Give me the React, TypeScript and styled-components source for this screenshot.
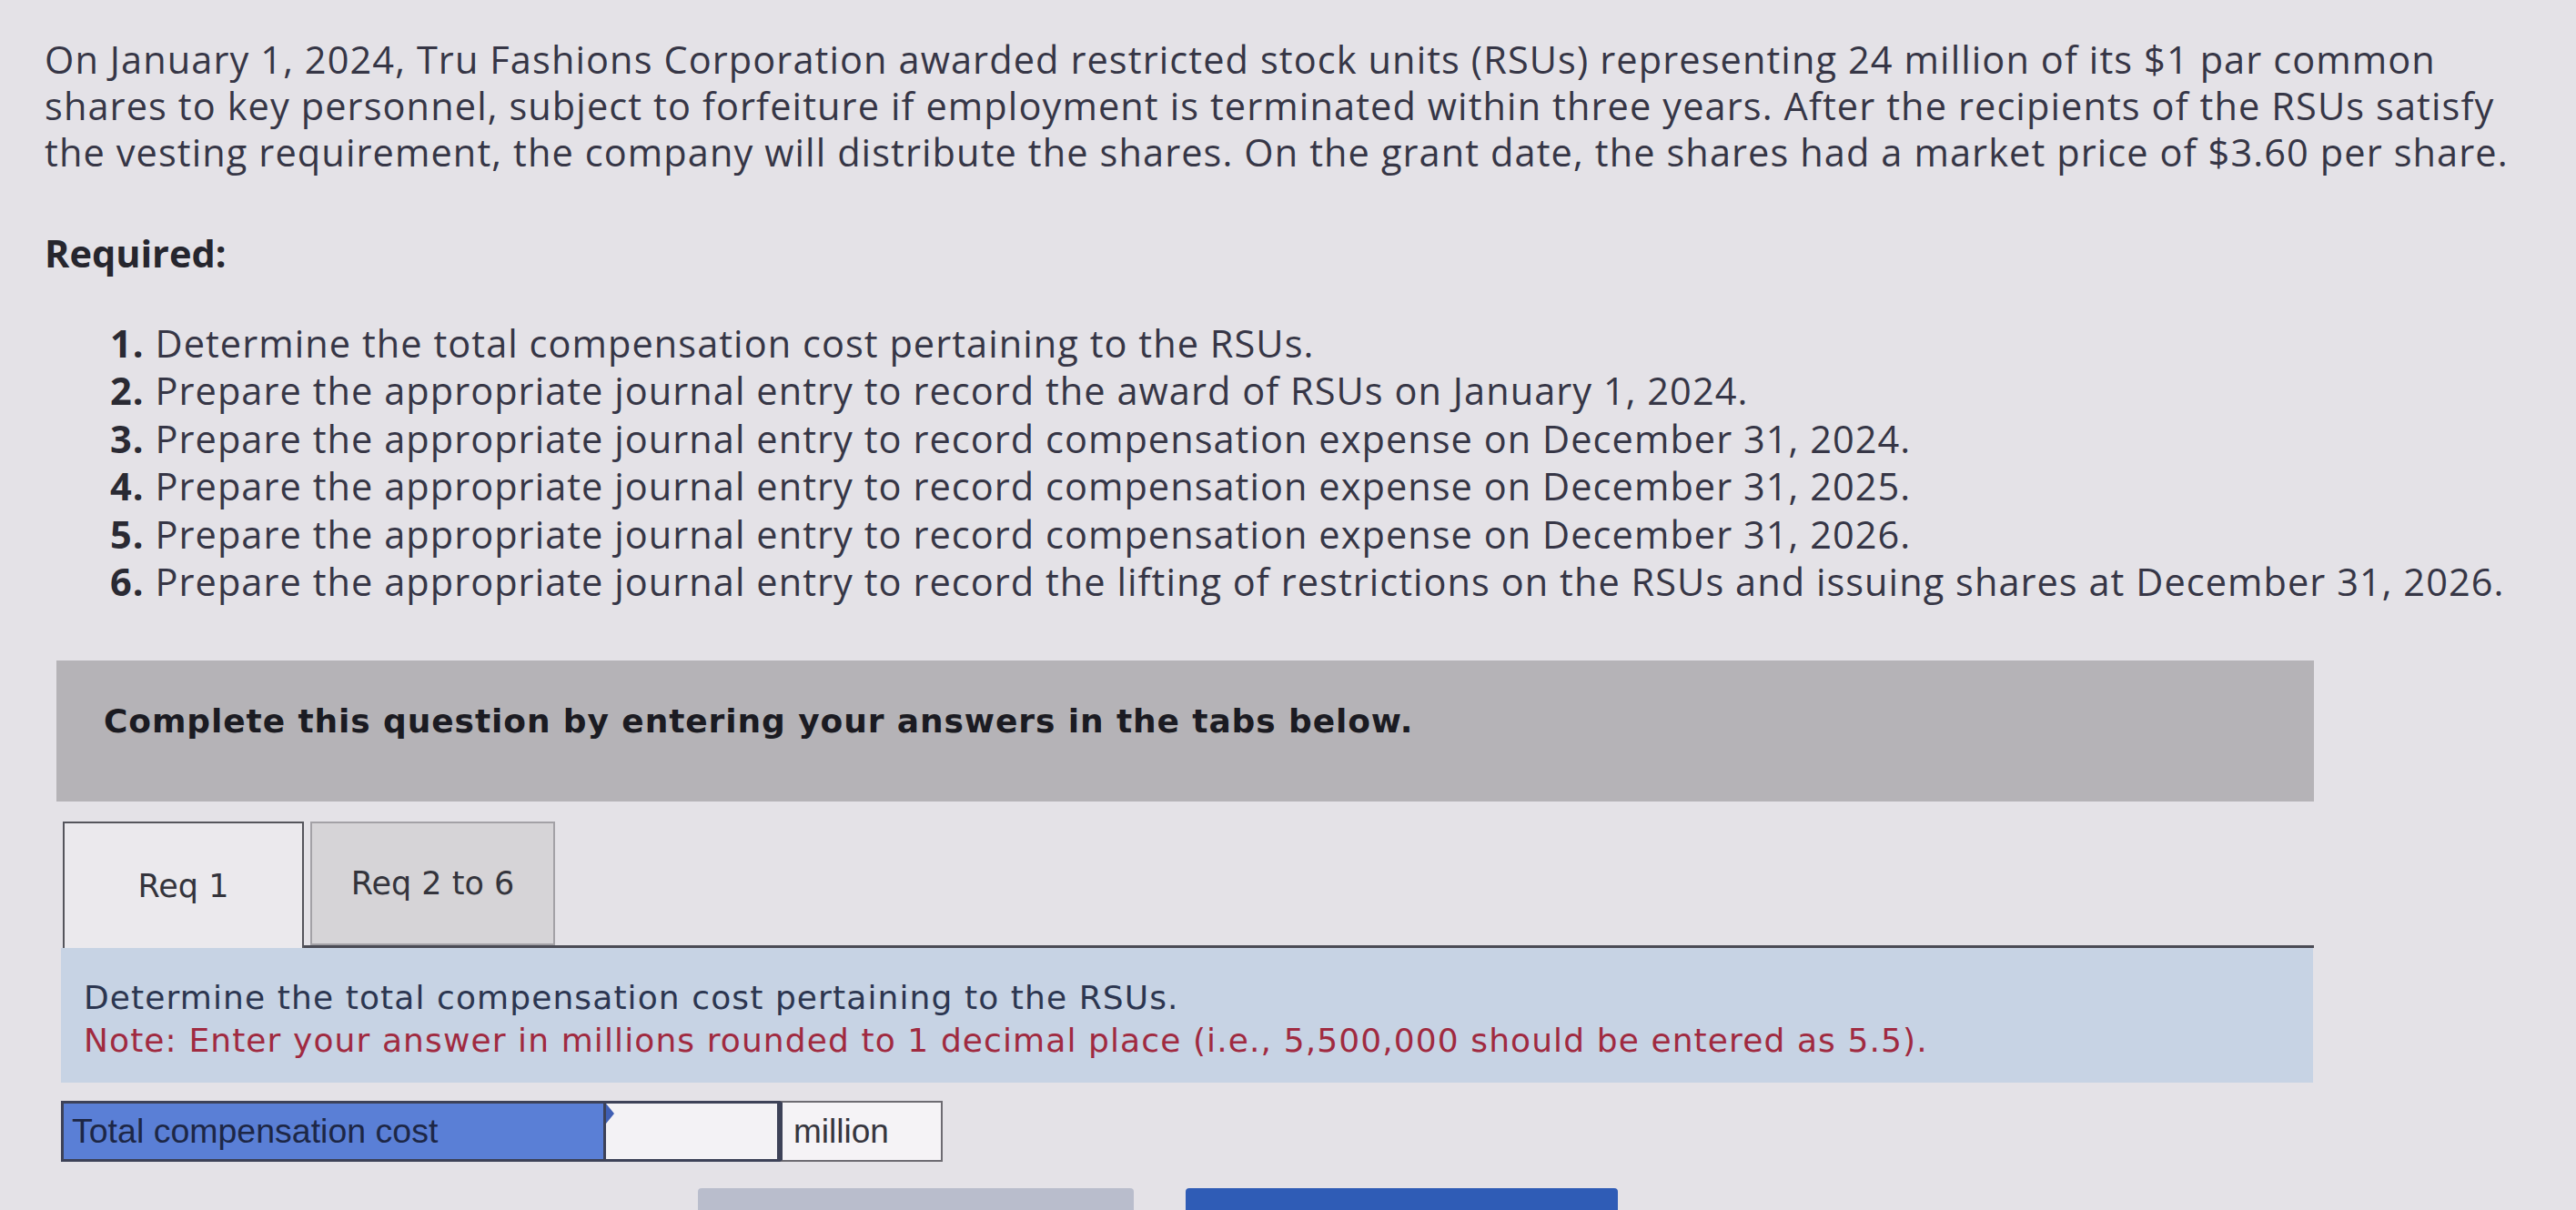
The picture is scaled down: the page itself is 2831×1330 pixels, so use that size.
import React from "react";
import styled, { createGlobalStyle } from "styled-components";

const Global = createGlobalStyle`
  html, body {
    margin: 0;
    padding: 0;
    background: #e4e2e7;
  }
  body {
    width: 2831px;
    height: 1330px;
    overflow: hidden;
  }
`;

const Page = styled.div`
  padding: 40px 0 0 49px;
  font-family: "Open Sans", Lato, sans-serif;
  color: #363646;
`;

const Intro = styled.p`
  margin: 0;
  font-size: 41.5px;
  line-height: 51px;
  white-space: nowrap;
  letter-spacing: 1.1px;
`;

const Line = styled.span`
  display: block;
`;

const Required = styled.h3`
  margin: 60px 0 0;
  font-size: 41.5px;
  line-height: 51px;
  font-weight: 700;
  color: #26262e;
`;

const List = styled.ol`
  margin: 47px 0 0;
  padding: 0 0 0 72px;
  list-style: none;
`;

const Item = styled.li`
  font-size: 41.5px;
  line-height: 52.4px;
  white-space: nowrap;
  letter-spacing: 1.05px;
`;

const Num = styled.b`
  font-weight: 700;
  color: #2a2a33;
`;

const Banner = styled.div`
  margin: 61px 0 0 13px;
  width: 2481px;
  height: 155px;
  box-sizing: border-box;
  padding: 46px 0 0 52px;
  background: #b5b3b7;
  font-family: "DejaVu Sans", Verdana, sans-serif;
  font-weight: 700;
  font-size: 36px;
  letter-spacing: 0.9px;
  color: #1b1b22;
`;

const TabBar = styled.div`
  margin: 22px 0 0 20px;
  width: 2474px;
  display: flex;
  align-items: flex-end;
`;

const Tab = styled.div<{ $active?: boolean }>`
  box-sizing: border-box;
  height: ${(p) => (p.$active ? "139px" : "136px")};
  width: ${(p) => (p.$active ? "265px" : "269px")};
  display: flex;
  align-items: center;
  justify-content: center;
  font-family: "DejaVu Sans", Verdana, sans-serif;
  font-size: 35px;
  color: #34343c;
  background: ${(p) => (p.$active ? "#ebe9ed" : "#d6d4d7")};
  border: 2px solid ${(p) => (p.$active ? "#55555c" : "#a3a1a6")};
  border-bottom: ${(p) => (p.$active ? "none" : "2px solid #a3a1a6")};
`;

const TabRest = styled.div`
  flex: 1;
  display: flex;
  padding-left: 7px;
  border-bottom: 3px solid #4b4b55;
`;

const InfoBox = styled.div`
  margin-left: 18px;
  width: 2475px;
  box-sizing: border-box;
  padding: 31px 0 23px 25px;
  background: #c7d3e4;
  font-family: "DejaVu Sans", Verdana, sans-serif;
  font-size: 36px;
  letter-spacing: 1.1px;
  line-height: 47px;
  color: #2c3650;
`;

const Note = styled.div`
  color: #a02a40;
`;

const AnswerRow = styled.div`
  margin: 20px 0 0 18px;
  display: flex;
  height: 67px;
`;

const AnswerTable = styled.div`
  display: flex;
  box-sizing: border-box;
  border: 3px solid #3d4258;
`;

const LabelCell = styled.div`
  width: 593px;
  box-sizing: border-box;
  padding-left: 9px;
  display: flex;
  align-items: center;
  background: #5a7fd6;
  font-family: "Liberation Sans", Arial, sans-serif;
  font-size: 37.5px;
  color: #1d2746;
`;

const InputCell = styled.div`
  position: relative;
  width: 188px;
  background: #f3f2f5;
  border-left: 3px solid #3d4258;
`;

const Flag = styled.span`
  position: absolute;
  left: 0;
  top: 0;
  width: 0;
  height: 0;
  border-top: 11px solid transparent;
  border-bottom: 11px solid transparent;
  border-left: 9px solid #3f5fb4;
`;

const UnitCell = styled.div`
  width: 179px;
  box-sizing: border-box;
  padding-left: 12px;
  display: flex;
  align-items: center;
  background: #f5f3f6;
  border: 2px solid #6d6b72;
  border-left: 3px solid #3d4258;
  font-family: "Liberation Sans", Arial, sans-serif;
  font-size: 37px;
  color: #36363e;
`;

const ButtonRow = styled.div`
  margin: 29px 0 0 718px;
  display: flex;
  gap: 57px;
`;

const Button = styled.button<{ $primary?: boolean }>`
  width: ${(p) => (p.$primary ? "475px" : "479px")};
  height: 70px;
  border: none;
  border-radius: 4px 4px 0 0;
  background: ${(p) => (p.$primary ? "#2f5cb6" : "#b9bdcc")};
`;

const items: [string, string][] = [
  ["1.", "Determine the total compensation cost pertaining to the RSUs."],
  ["2.", "Prepare the appropriate journal entry to record the award of RSUs on January 1, 2024."],
  ["3.", "Prepare the appropriate journal entry to record compensation expense on December 31, 2024."],
  ["4.", "Prepare the appropriate journal entry to record compensation expense on December 31, 2025."],
  ["5.", "Prepare the appropriate journal entry to record compensation expense on December 31, 2026."],
  ["6.", "Prepare the appropriate journal entry to record the lifting of restrictions on the RSUs and issuing shares at December 31, 2026."],
];

export default function App() {
  return (
    <>
      <Global />
      <Page>
        <Intro>
          <Line>On January 1, 2024, Tru Fashions Corporation awarded restricted stock units (RSUs) representing 24 million of its $1 par common</Line>
          <Line>shares to key personnel, subject to forfeiture if employment is terminated within three years. After the recipients of the RSUs satisfy</Line>
          <Line>the vesting requirement, the company will distribute the shares. On the grant date, the shares had a market price of $3.60 per share.</Line>
        </Intro>
        <Required>Required:</Required>
        <List>
          {items.map(([n, t]) => (
            <Item key={n}>
              <Num>{n}</Num> {t}
            </Item>
          ))}
        </List>
        <Banner>Complete this question by entering your answers in the tabs below.</Banner>
        <TabBar>
          <Tab $active>Req 1</Tab>
          <TabRest>
            <Tab>Req 2 to 6</Tab>
          </TabRest>
        </TabBar>
        <InfoBox>
          <div>Determine the total compensation cost pertaining to the RSUs.</div>
          <Note>Note: Enter your answer in millions rounded to 1 decimal place (i.e., 5,500,000 should be entered as 5.5).</Note>
        </InfoBox>
        <AnswerRow>
          <AnswerTable>
            <LabelCell>Total compensation cost</LabelCell>
            <InputCell>
              <Flag />
            </InputCell>
          </AnswerTable>
          <UnitCell>million</UnitCell>
        </AnswerRow>
        <ButtonRow>
          <Button />
          <Button $primary />
        </ButtonRow>
      </Page>
    </>
  );
}
